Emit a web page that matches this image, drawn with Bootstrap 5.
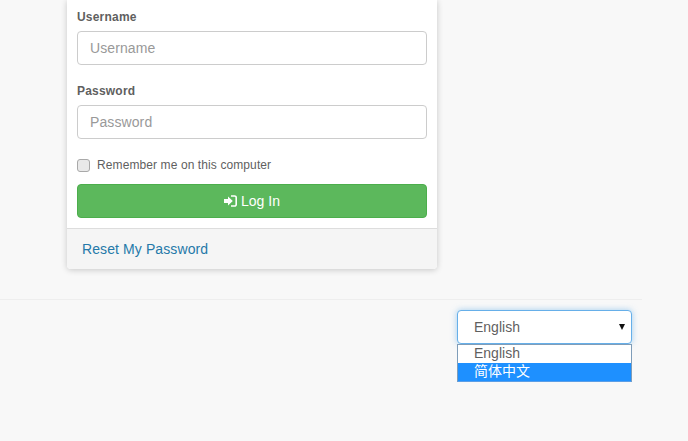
<!DOCTYPE html>
<html lang="en">
<head>
  <meta charset="UTF-8">
  <meta name="viewport" content="width=device-width, initial-scale=1.0">
  <title>Log In</title>
  <link href="https://cdn.jsdelivr.net/npm/bootstrap@5.3.0/dist/css/bootstrap.min.css" rel="stylesheet">
  <style>
    body {
      font-family: "Liberation Sans", "Noto Sans CJK SC", sans-serif;
      background-color: #f8f8f8;
      color: #5f5f5f;
      font-size: 14px;
      overflow: hidden;
    }
    .page-wrap {
      width: 642px;
      height: 441px;
    }
    .login-area {
      padding-left: 67px;
    }
    .login-card {
      width: 370px;
      border: 0;
      border-radius: 0 0 4px 4px;
      box-shadow: 0 1px 6px rgba(0, 0, 0, .2);
      clip-path: inset(0 -10px -10px -10px);
    }
    .login-body {
      padding: 10px 10px 10px;
    }
    .login-label {
      display: block;
      font-size: 12px;
      font-weight: 700;
      line-height: 14px;
      letter-spacing: .2px;
      margin-bottom: 7px;
    }
    .login-input {
      height: 34px;
      padding: 6px 12px;
      font-size: 14px;
      letter-spacing: .1px;
      color: #555;
      border-color: #ccc;
      border-radius: 4px;
      margin-bottom: 19px;
    }
    .login-input::placeholder {
      color: #999;
    }
    .remember-row {
      height: 16px;
      font-size: 12px;
      letter-spacing: .1px;
      margin-top: -1px;
      margin-bottom: 11px;
      gap: 7px;
    }
    .remember-box {
      width: 13px;
      height: 13px;
      margin: 0;
      border-color: #a9a9a9;
      background-color: #e9e9e9;
      border-radius: 3px;
    }
    .login-btn {
      height: 34px;
      padding: 0;
      font-size: 14px;
      background-color: #5cb85c;
      border-color: #4cae4c;
      border-radius: 4px;
    }
    .login-foot {
      height: 41px;
      padding: 0 15px;
      background-color: #f5f5f5;
      border-top: 1px solid #ddd;
      border-radius: 0 0 4px 4px;
    }
    .login-foot a {
      color: #2579a9;
      letter-spacing: .1px;
      text-decoration: none;
    }
    .foot-line {
      margin: 30px 0 10px;
      border-top: 1px solid #eee;
      opacity: 1;
    }
    .lang-area {
      padding-left: 457px;
    }
    .lang-picker {
      width: 175px;
    }
    .lang-current {
      height: 34px;
      padding: 0 6px 0 16px;
      background-color: #fff;
      border: 1px solid #66afe9;
      border-radius: 4px;
      box-shadow: 0 0 6px rgba(102, 175, 233, .6);
    }
    .lang-arrow {
      width: 0;
      height: 0;
      border-left: 3.5px solid transparent;
      border-right: 3.5px solid transparent;
      border-top: 6px solid #111;
    }
    .lang-menu {
      top: 34px;
      left: 0;
      width: 175px;
      background-color: #fff;
      border: 1px solid #7f9db9;
      border-bottom-color: #5b9ee6;
      line-height: 17px;
    }
    .lang-menu div {
      padding: 0 16px;
      height: 18px;
    }
    .lang-menu .lang-active {
      background-color: #1e90ff;
      color: #fff;
    }
  </style>
</head>
<body>

  <div class="page-wrap">
    <div class="login-area">
      <div class="card login-card">
        <form class="login-body">
          <label class="login-label" for="username">Username</label>
          <input type="text" id="username" class="form-control login-input" placeholder="Username">

          <label class="login-label" for="password">Password</label>
          <input type="password" id="password" class="form-control login-input" placeholder="Password">

          <div class="remember-row d-flex align-items-center">
            <input type="checkbox" id="remember" class="form-check-input remember-box">
            <label for="remember">Remember me on this computer</label>
          </div>

          <button type="button" class="btn btn-success w-100 login-btn d-flex align-items-center justify-content-center gap-1">
            <svg width="13" height="12" viewBox="0 0 13 12" aria-hidden="true">
              <path fill="#fff" d="M0 4h4V1.5L8.8 6 4 10.5V8H0z"/>
              <path fill="none" stroke="#fff" stroke-width="1.6" d="M7 1h3.5A1.6 1.6 0 0 1 12.2 2.6v6.8A1.6 1.6 0 0 1 10.5 11H7"/>
            </svg>
            <span>Log In</span>
          </button>
        </form>
        <div class="login-foot d-flex align-items-center">
          <a href="#">Reset My Password</a>
        </div>
      </div>
    </div>

    <hr class="foot-line">

    <div class="lang-area">
      <div class="lang-picker position-relative">
        <div class="lang-current d-flex align-items-center justify-content-between">
          <span>English</span>
          <span class="lang-arrow"></span>
        </div>
        <div class="lang-menu position-absolute">
          <div>English</div>
          <div class="lang-active">简体中文</div>
        </div>
      </div>
    </div>
  </div>

  <script src="https://cdn.jsdelivr.net/npm/bootstrap@5.3.0/dist/js/bootstrap.bundle.min.js"></script>
</body>
</html>
